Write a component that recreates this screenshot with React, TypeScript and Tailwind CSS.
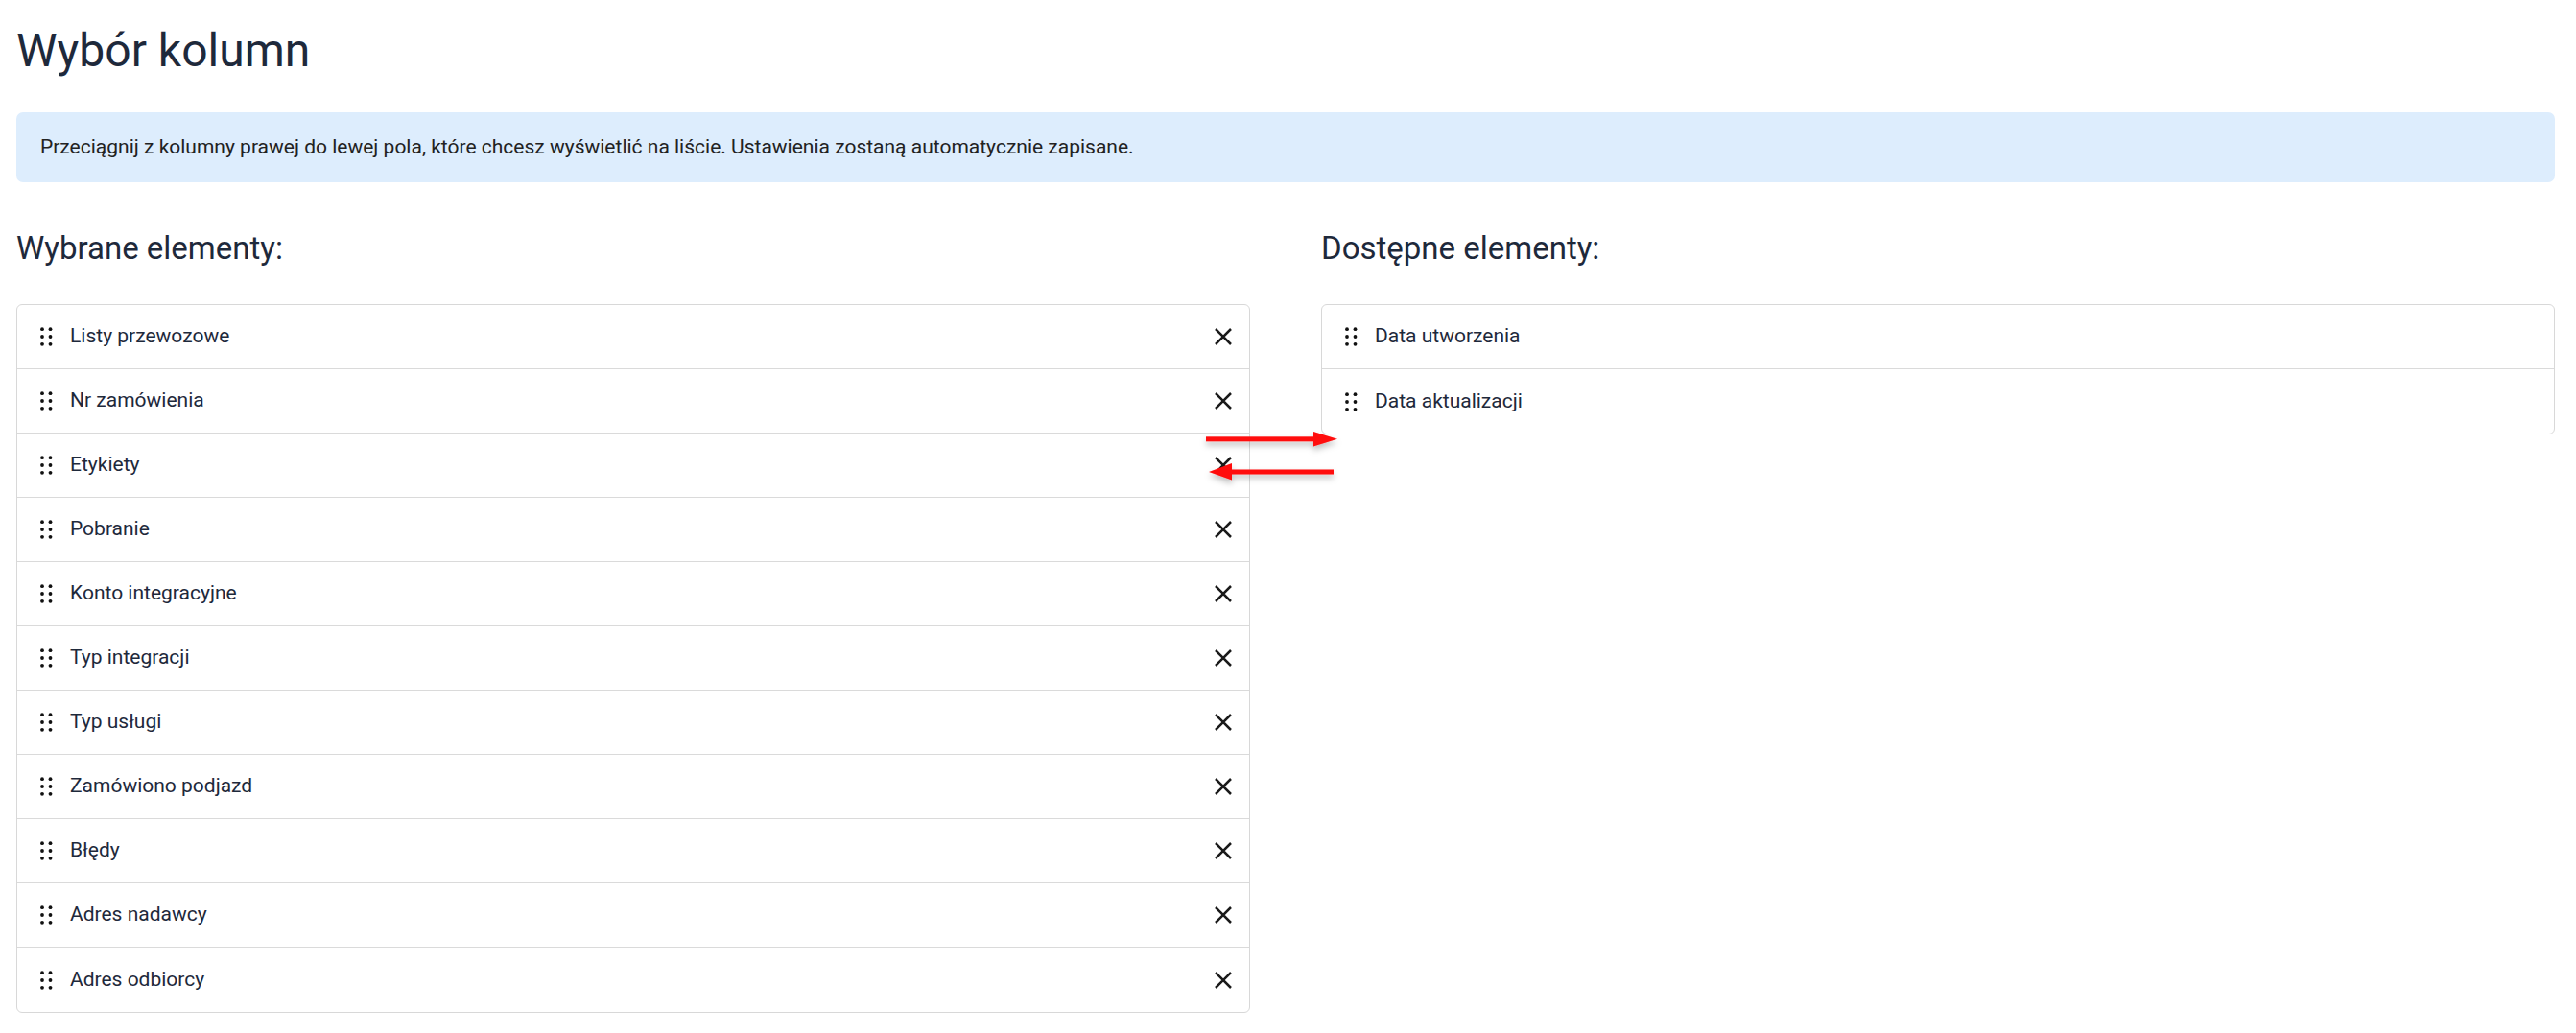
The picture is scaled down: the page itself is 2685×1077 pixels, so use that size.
import React from 'react';

const selected = [
  'Listy przewozowe',
  'Nr zamówienia',
  'Etykiety',
  'Pobranie',
  'Konto integracyjne',
  'Typ integracji',
  'Typ usługi',
  'Zamówiono podjazd',
  'Błędy',
  'Adres nadawcy',
  'Adres odbiorcy',
];

const available = ['Data utworzenia', 'Data aktualizacji'];

function DragHandle() {
  return (
    <svg width="13" height="20" viewBox="0 0 13 20" className="shrink-0">
      {[2, 10.5].map(cx =>
        [2.2, 10, 17.8].map(cy => <circle key={`${cx}-${cy}`} cx={cx} cy={cy} r="1.9" fill="#111" />)
      )}
    </svg>
  );
}

function CloseIcon() {
  return (
    <svg width="20" height="20" viewBox="0 0 20 20" className="shrink-0">
      <path d="M2 2 L18 18 M18 2 L2 18" stroke="#1a1a1a" strokeWidth="2.5" strokeLinecap="butt" />
    </svg>
  );
}

function Row({ label, removable }: { label: string; removable?: boolean }) {
  return (
    <div className="flex items-center h-[67px] border-b border-[#dadada] last:border-b-0 pl-[24px] pr-[17px]">
      <DragHandle />
      <span className="ml-[18px] flex-1 text-[21px] text-[#1e293b]">{label}</span>
      {removable && <CloseIcon />}
    </div>
  );
}

function Column({ title, items, removable }: { title: string; items: string[]; removable?: boolean }) {
  return (
    <div className="flex flex-col">
      <h2 className="mt-[49px] text-[33px] leading-[40px] text-[#1e293b]">{title}</h2>
      <div className="mt-[38px] border border-[#d8d8d8] rounded-[6px] bg-white">
        {items.map(i => (
          <Row key={i} label={i} removable={removable} />
        ))}
      </div>
    </div>
  );
}

export default function App() {
  return (
    <div className="relative min-h-screen bg-white pl-[17px] pr-[22px] font-['Roboto',sans-serif]">
      <h1 className="pt-[24px] text-[48px] leading-[58px] text-[#1e293b]">Wybór kolumn</h1>

      <div className="mt-[35px] h-[73px] flex items-center px-[25px] rounded-[7px] bg-[#ddedfd] text-[21px] text-[#222]">
        Przeciągnij z kolumny prawej do lewej pola, które chcesz wyświetlić na liście. Ustawienia zostaną automatycznie zapisane.
      </div>

      <div className="grid grid-cols-2 gap-[74px]">
        <Column title="Wybrane elementy:" items={selected} removable />
        <Column title="Dostępne elementy:" items={available} />
      </div>

      {/* annotation arrows laid over the lists */}
      <svg className="absolute left-0 top-0 pointer-events-none" width="2685" height="1077">
        <defs>
          <filter id="arrowShadow" x="-10%" y="-100%" width="120%" height="400%">
            <feDropShadow dx="0" dy="4" stdDeviation="3" floodColor="#000" floodOpacity="0.25" />
          </filter>
        </defs>
        <g filter="url(#arrowShadow)" fill="#ff0a0a" stroke="none">
          <rect x="1257" y="455.3" width="114" height="5" />
          <polygon points="1369,450 1394,457.7 1369,465.5" />
          <rect x="1281" y="489.5" width="109" height="5" />
          <polygon points="1284,483 1260,492 1284,500.5" />
        </g>
      </svg>
    </div>
  );
}
